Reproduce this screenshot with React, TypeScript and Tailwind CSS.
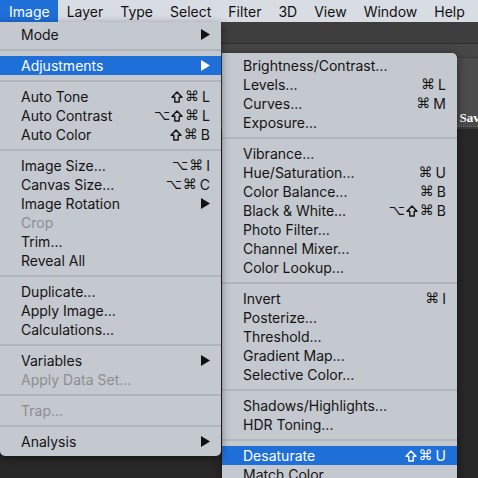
import React from "react";

type Item =
  | { sep: true }
  | { label: string; shortcut?: string; sub?: boolean; disabled?: boolean; active?: boolean };

const mainItems: Item[] = [
  { label: "Mode", sub: true },
  { sep: true },
  { label: "Adjustments", sub: true, active: true },
  { sep: true },
  { label: "Auto Tone", shortcut: "⇧⌘L" },
  { label: "Auto Contrast", shortcut: "⌥⇧⌘L" },
  { label: "Auto Color", shortcut: "⇧⌘B" },
  { sep: true },
  { label: "Image Size...", shortcut: "⌥⌘I" },
  { label: "Canvas Size...", shortcut: "⌥⌘C" },
  { label: "Image Rotation", sub: true },
  { label: "Crop", disabled: true },
  { label: "Trim..." },
  { label: "Reveal All" },
  { sep: true },
  { label: "Duplicate..." },
  { label: "Apply Image..." },
  { label: "Calculations..." },
  { sep: true },
  { label: "Variables", sub: true },
  { label: "Apply Data Set...", disabled: true },
  { sep: true },
  { label: "Trap...", disabled: true },
  { sep: true },
  { label: "Analysis", sub: true },
];

const subItems: Item[] = [
  { label: "Brightness/Contrast..." },
  { label: "Levels...", shortcut: "⌘L" },
  { label: "Curves...", shortcut: "⌘M" },
  { label: "Exposure..." },
  { sep: true },
  { label: "Vibrance..." },
  { label: "Hue/Saturation...", shortcut: "⌘U" },
  { label: "Color Balance...", shortcut: "⌘B" },
  { label: "Black & White...", shortcut: "⌥⇧⌘B" },
  { label: "Photo Filter..." },
  { label: "Channel Mixer..." },
  { label: "Color Lookup..." },
  { sep: true },
  { label: "Invert", shortcut: "⌘I" },
  { label: "Posterize..." },
  { label: "Threshold..." },
  { label: "Gradient Map..." },
  { label: "Selective Color..." },
  { sep: true },
  { label: "Shadows/Highlights..." },
  { label: "HDR Toning..." },
  { sep: true },
  { label: "Desaturate", shortcut: "⇧⌘U", active: true },
  { label: "Match Color..." },
];

const menuBar = ["Image", "Layer", "Type", "Select", "Filter", "3D", "View", "Window", "Help"];

function Arrow({ white }: { white?: boolean }) {
  return (
    <svg width="9" height="11" viewBox="0 0 9 11">
      <path d="M0 0 L9 5.5 L0 11 Z" fill={white ? "#ffffff" : "#111111"} />
    </svg>
  );
}

// shift key glyph, hollow arrow
function ShiftIcon() {
  return (
    <svg width="12" height="12" viewBox="0 0 12 12" className="mr-[1px]">
      <path d="M6 1 L11 6.3 H8.2 V11 H3.8 V6.3 H1 Z" fill="none" stroke="currentColor" strokeWidth="1.4" strokeLinejoin="round" />
    </svg>
  );
}

function Shortcut({ text }: { text: string }) {
  return (
    <span className="flex items-center gap-[1px] font-['DejaVu_Sans',sans-serif] text-[14px]">
      {text.split("").map((c, i) =>
        c === "⇧" ? (
          <ShiftIcon key={i} />
        ) : (
          <span key={i} className={/[A-Z]/.test(c) ? "font-['Inter',sans-serif] text-[14px] ml-[2px]" : ""}>
            {c}
          </span>
        )
      )}
    </span>
  );
}

function MenuRows({ items }: { items: Item[] }) {
  return (
    <>
      {items.map((it, i) =>
        "sep" in it ? (
          <div key={i} className="h-[12px] flex items-center">
            <div className="h-[2px] w-full bg-[#b1b5bb]" />
          </div>
        ) : (
          <div
            key={i}
            className={`h-[19px] flex items-center justify-between pl-[21px] pr-[11px] ${
              it.active ? "bg-[#1e6fd7] text-white" : it.disabled ? "text-[#8b8e93]" : "text-[#141414]"
            }`}
          >
            <span>{it.label}</span>
            {it.shortcut && <Shortcut text={it.shortcut} />}
            {it.sub && <Arrow white={it.active} />}
          </div>
        )
      )}
    </>
  );
}

export default function App() {
  return (
    <div className="relative w-[478px] h-[478px] overflow-hidden bg-[#282828] font-['Inter',sans-serif] text-[14px]">
      <div className="h-[22px] bg-[#d8dce3] flex items-center text-[14px] text-[#111]">
        {menuBar.map((m, i) => (
          <div
            key={m}
            className={`h-full flex items-center px-[8.5px] ${i === 0 ? "bg-[#1e6fd7] text-white pl-[9px]" : ""}`}
          >
            {m}
          </div>
        ))}
      </div>

      <div className="flex flex-col">
        <div className="h-[21px] bg-[#3e3e3e]" />
        <div className="h-[1px] bg-[#2c2c2c]" />
        <div className="h-[13px] bg-[#474747]" />
        <div className="h-[1px] bg-[#383838]" />
        <div className="h-[68px] bg-[#4c4c4c] flex items-end">
          <span className="ml-[452px] text-white font-bold font-['Liberation_Serif',serif] text-[13px] whitespace-nowrap leading-[16px]">
            - Save
          </span>
        </div>
        <div className="h-[3px] bg-[#3a3a3a] border-t border-dotted border-[#777]" />
      </div>

      <div className="absolute left-[222px] top-[53px] w-[235px] pt-[3px] pb-[4px] bg-[#c4c8cf] rounded-tr-[5px] shadow-[0_2px_10px_rgba(0,0,0,0.5)]">
        <MenuRows items={subItems} />
      </div>

      <div className="absolute left-0 top-[22px] w-[221px] pt-[3px] pb-[5px] bg-[#c4c8cf] rounded-b-[5px] shadow-[0_2px_8px_rgba(0,0,0,0.45)]">
        <MenuRows items={mainItems} />
      </div>
    </div>
  );
}
